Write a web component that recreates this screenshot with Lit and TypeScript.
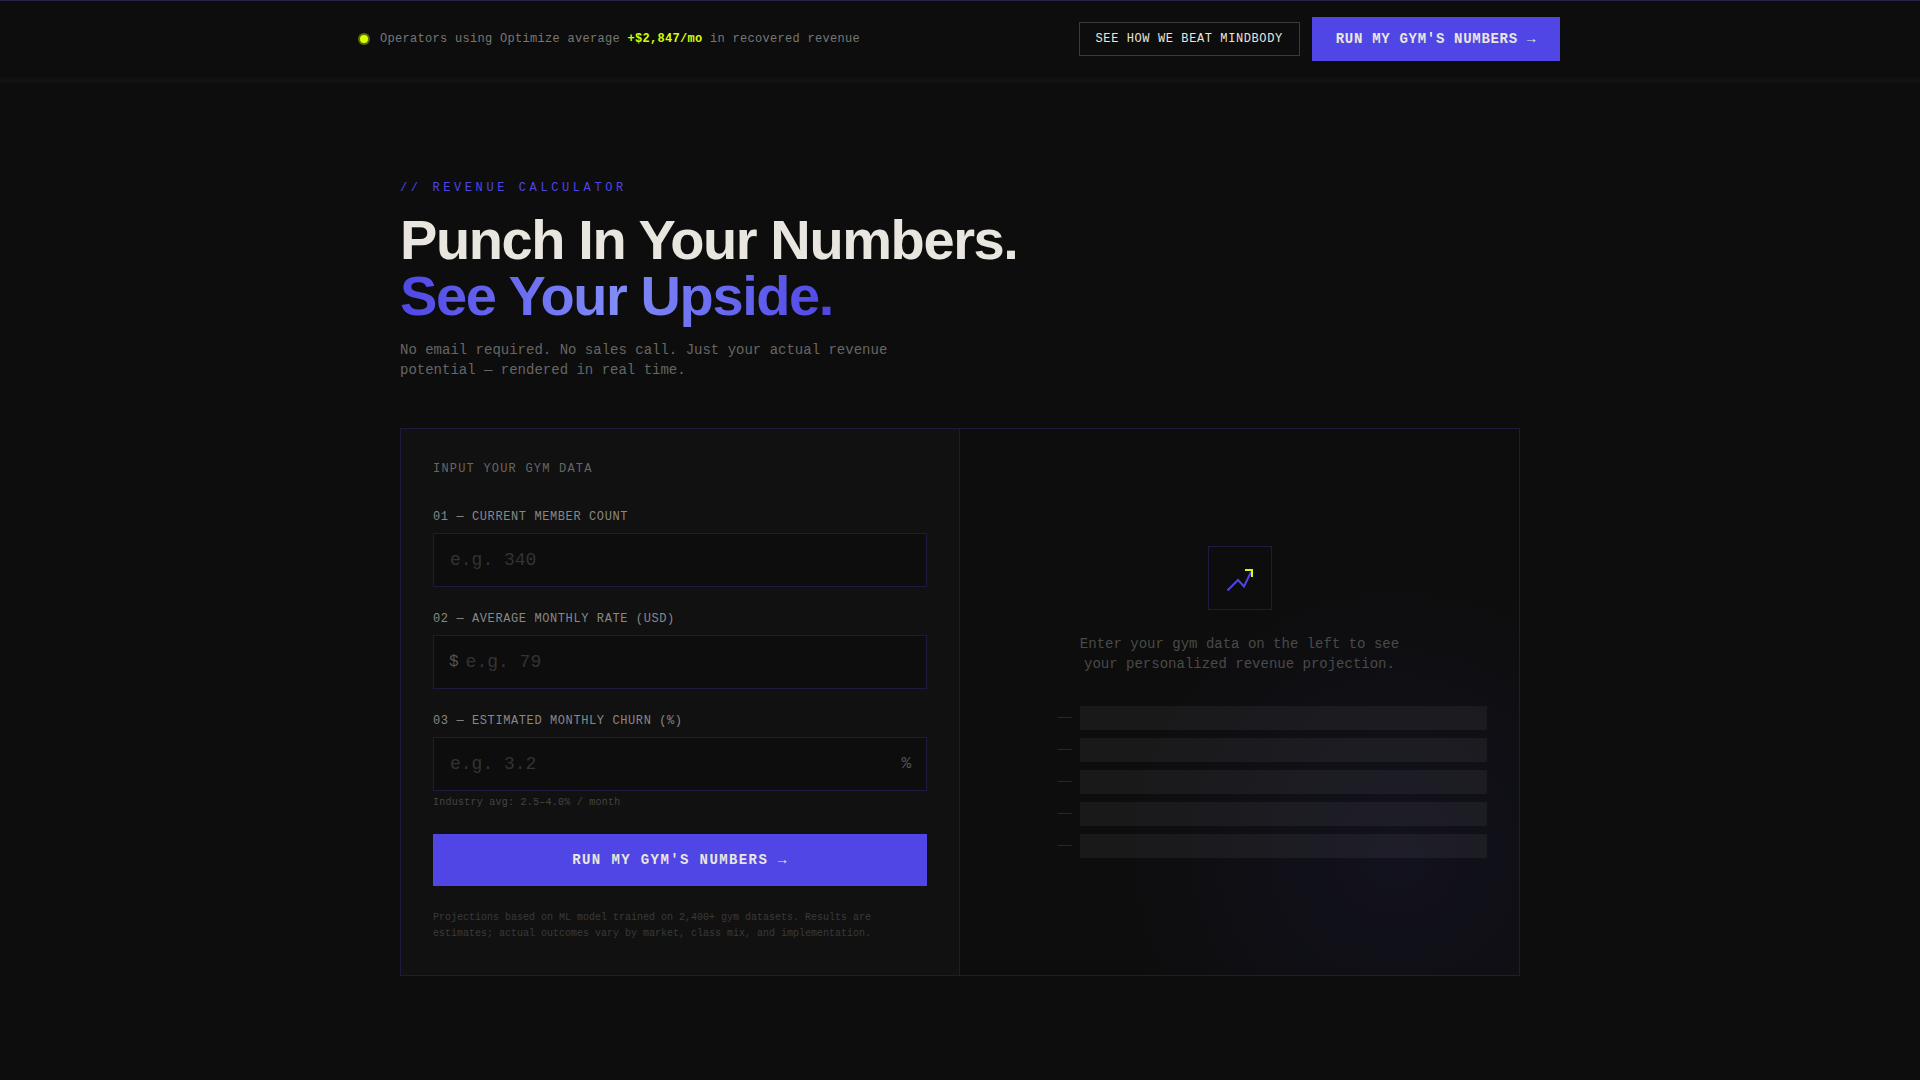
import { LitElement, html, css, svg } from "lit";
import { customElement } from "lit/decorators.js";

@customElement("app-root")
export class AppRoot extends LitElement {
  static styles = css`
    :host {
      --bg: #0d0d0d;
      --panel: #111111;
      --line: #1e1b40;
      --accent: #4f46e5;
      --lime: #d4ff00;
      --ink: #e8e6df;
      display: block;
      min-height: 100vh;
      background: var(--bg);
      color: var(--ink);
      font-family: "Liberation Mono", monospace;
      font-size: 14px;
      line-height: 20px;
    }
    * {
      box-sizing: border-box;
    }
    h1, h2, p {
      margin: 0;
      font-weight: 400;
    }
    .topbar {
      border-top: 1px solid #26224f;
      padding: 16px 24px;
    }
    .topbar-inner {
      max-width: 1200px;
      margin: 0 auto;
      display: flex;
      align-items: center;
      justify-content: space-between;
      gap: 16px;
    }
    .status {
      display: flex;
      align-items: center;
      gap: 12px;
      font-size: 12px;
      line-height: 16px;
      letter-spacing: 0.025em;
      color: #777777;
    }
    .dot {
      width: 8px;
      height: 8px;
      border-radius: 50%;
      background: var(--lime);
      box-shadow: 0 0 0 2px rgba(212, 255, 0, 0.4);
    }
    .status strong {
      color: var(--lime);
    }
    .actions {
      display: flex;
      align-items: center;
      gap: 12px;
    }
    .ghost {
      border: 1px solid #3a3a3a;
      padding: 8px 16px;
      font-size: 12px;
      line-height: 16px;
      letter-spacing: 0.05em;
      color: var(--ink);
      text-decoration: none;
    }
    .primary {
      border: 0;
      background: var(--accent);
      color: var(--ink);
      font: 700 14px/20px "Liberation Mono", monospace;
      padding: 12px 24px;
      letter-spacing: 0.05em;
    }
    .rule {
      height: 7px;
      background: linear-gradient(#0f0f0f, #121212, #0f0f0f);
    }
    .calculator {
      max-width: 1168px;
      margin: 0 auto;
      padding: 96px 24px;
    }
    .eyebrow {
      font-size: 12px;
      line-height: 16px;
      letter-spacing: 0.3em;
      color: var(--accent);
      margin-bottom: 16px;
    }
    h1 {
      font: 700 56px/56px "Liberation Sans", sans-serif;
      letter-spacing: -0.025em;
      margin-bottom: 16px;
    }
    .upside {
      background: linear-gradient(90deg, #4f46e5, #818cf8, #4f46e5);
      -webkit-background-clip: text;
      background-clip: text;
      color: transparent;
    }
    .lead {
      max-width: 512px;
      color: #666666;
      margin-bottom: 48px;
    }
    .card {
      display: grid;
      grid-template-columns: 1fr 1fr;
      border: 1px solid var(--line);
    }
    .form {
      background: var(--panel);
      border-right: 1px solid var(--line);
      padding: 32px 32px 33px;
      display: flex;
      flex-direction: column;
      gap: 24px;
    }
    h2 {
      font-size: 12px;
      line-height: 16px;
      letter-spacing: 0.1em;
      color: #666666;
      margin-bottom: 8px;
    }
    .field {
      display: flex;
      flex-direction: column;
    }
    label {
      font-size: 12px;
      line-height: 16px;
      letter-spacing: 0.05em;
      color: #888888;
      margin-bottom: 8px;
    }
    .box {
      display: flex;
      align-items: center;
      height: 54px;
      padding: 0 15px 0 16px;
      border: 1px solid var(--line);
      background: var(--bg);
      font-size: 16px;
      color: #555555;
    }
    .box.money {
      padding-left: 15px;
      gap: 7px;
    }
    input {
      flex: 1;
      min-width: 0;
      border: 0;
      padding: 0;
      outline: 0;
      background: none;
      color: var(--ink);
      font: 18px/28px "Liberation Mono", monospace;
    }
    input::placeholder {
      color: #333333;
      opacity: 1;
    }
    .hint {
      font-size: 10px;
      line-height: 15px;
      letter-spacing: 0.025em;
      color: #444444;
      margin-top: 4px;
    }
    .submit {
      padding: 16px 24px;
      letter-spacing: 0.1em;
    }
    .note {
      font-size: 10px;
      line-height: 16px;
      color: #3a3a3a;
    }
    .result {
      padding: 32px;
      display: flex;
      flex-direction: column;
      align-items: center;
      justify-content: center;
      background: radial-gradient(circle at 78% 78%, rgba(79, 70, 229, 0.08), transparent 290px);
    }
    .icon {
      width: 64px;
      height: 64px;
      display: grid;
      place-items: center;
      border: 1px solid var(--line);
      margin-bottom: 24px;
    }
    .prompt {
      max-width: 320px;
      text-align: center;
      color: #4a4a4a;
      margin-bottom: 32px;
    }
    .bars {
      align-self: stretch;
      display: flex;
      flex-direction: column;
      gap: 8px;
    }
    .row {
      display: flex;
      align-items: center;
      gap: 8px;
    }
    .tick {
      width: 80px;
      text-align: right;
      font-size: 12px;
      line-height: 16px;
      color: #2a2a2a;
    }
    .bar {
      flex: 1;
      height: 24px;
      background: rgba(255, 255, 255, 0.05);
    }
  `;

  private icon() {
    return svg`<svg width="28" height="28" viewBox="0 0 28 28" fill="none" stroke-width="2" aria-hidden="true">
      <path d="M1.5 26.5L12 16L18 22.5L25 8" stroke="#4f46e5"></path>
      <path d="M19 6H26V13" stroke="#d4ff00"></path>
    </svg>`;
  }

  render() {
    return html`
      <header class="topbar">
        <div class="topbar-inner">
          <div class="status">
            <span class="dot"></span>
            <span>Operators using Optimize average <strong>+$2,847/mo</strong> in recovered revenue</span>
          </div>
          <div class="actions">
            <a class="ghost" href="#compare">SEE HOW WE BEAT MINDBODY</a>
            <button class="primary" type="button">RUN MY GYM'S NUMBERS →</button>
          </div>
        </div>
      </header>
      <div class="rule"></div>
      <main class="calculator">
        <p class="eyebrow">// REVENUE CALCULATOR</p>
        <h1>Punch In Your Numbers.<br /><span class="upside">See Your Upside.</span></h1>
        <p class="lead">No email required. No sales call. Just your actual revenue potential — rendered in real time.</p>
        <div class="card">
          <form class="form">
            <h2>INPUT YOUR GYM DATA</h2>
            <div class="field">
              <label for="members">01 — CURRENT MEMBER COUNT</label>
              <div class="box"><input id="members" inputmode="numeric" placeholder="e.g. 340" /></div>
            </div>
            <div class="field">
              <label for="rate">02 — AVERAGE MONTHLY RATE (USD)</label>
              <div class="box money"><span>$</span><input id="rate" inputmode="decimal" placeholder="e.g. 79" /></div>
            </div>
            <div class="field">
              <label for="churn">03 — ESTIMATED MONTHLY CHURN (%)</label>
              <div class="box"><input id="churn" inputmode="decimal" placeholder="e.g. 3.2" /><span>%</span></div>
              <p class="hint">Industry avg: 2.5–4.0% / month</p>
            </div>
            <button class="primary submit" type="button">RUN MY GYM'S NUMBERS →</button>
            <p class="note">Projections based on ML model trained on 2,400+ gym datasets. Results are estimates; actual outcomes vary by market, class mix, and implementation.</p>
          </form>
          <section class="result">
            <div class="icon">${this.icon()}</div>
            <p class="prompt">Enter your gym data on the left to see your personalized revenue projection.</p>
            <div class="bars">
              ${[1, 2, 3, 4, 5].map(() => html`<div class="row"><span class="tick">——</span><span class="bar"></span></div>`)}
            </div>
          </section>
        </div>
      </main>
    `;
  }
}
